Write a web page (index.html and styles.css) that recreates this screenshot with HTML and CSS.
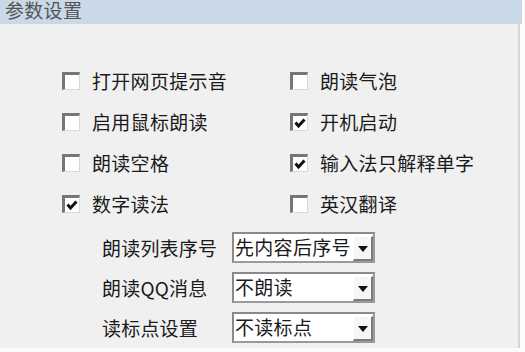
FILE: index.html
```html
<!DOCTYPE html>
<html lang="zh-CN">
<head>
    <meta charset="UTF-8">
    <title>参数设置</title>
    <link rel="stylesheet" href="styles.css">
</head>
<body>
    <div class="window">
        <div class="header">
            <span class="title">参数设置</span>
        </div>
        <div class="panel">
            <div class="options">
                <label class="check"><span class="box"></span><span>打开网页提示音</span></label>
                <label class="check"><span class="box"></span><span>朗读气泡</span></label>
                <label class="check"><span class="box"></span><span>启用鼠标朗读</span></label>
                <label class="check"><span class="box checked"><svg viewBox="0 0 12 12"><polyline points="1.5,5.5 4.5,9 10.5,2.5"/></svg></span><span>开机启动</span></label>
                <label class="check"><span class="box"></span><span>朗读空格</span></label>
                <label class="check"><span class="box checked"><svg viewBox="0 0 12 12"><polyline points="1.5,5.5 4.5,9 10.5,2.5"/></svg></span><span>输入法只解释单字</span></label>
                <label class="check"><span class="box checked"><svg viewBox="0 0 12 12"><polyline points="1.5,5.5 4.5,9 10.5,2.5"/></svg></span><span>数字读法</span></label>
                <label class="check"><span class="box"></span><span>英汉翻译</span></label>
            </div>
            <div class="selects">
                <span class="field-label">朗读列表序号</span>
                <div class="combo"><span class="combo-text">先内容后序号</span><span class="combo-btn"><i></i></span></div>
                <span class="field-label">朗读QQ消息</span>
                <div class="combo"><span class="combo-text">不朗读</span><span class="combo-btn"><i></i></span></div>
                <span class="field-label">读标点设置</span>
                <div class="combo"><span class="combo-text">不读标点</span><span class="combo-btn"><i></i></span></div>
            </div>
        </div>
    </div>
</body>
</html>
```

FILE: styles.css
```css
* {
    margin: 0;
    padding: 0;
    box-sizing: border-box;
}

body {
    width: 525px;
    height: 352px;
    overflow: hidden;
    background-color: #fbfbfb;
    font-family: 'Noto Sans CJK SC', 'Noto Sans', sans-serif;
    color: #1a1a1a;
}

.window {
    width: 522px;
    height: 352px;
    padding-top: 4px;
    background-color: #fbfbfb;
}

.header {
    height: 24px;
    background-color: #c9d9e8;
    padding-left: 5px;
}

.title {
    display: block;
    font-size: 19px;
    line-height: 19px;
    letter-spacing: 0.3px;
    color: #555;
    margin-top: -4px;
}

.panel {
    width: 520px;
    height: 324px;
    background-color: #f0f0f0;
    border-right: 2px solid #d6d6d6;
    padding-top: 36px;
}

/* checkbox grid */
.options {
    display: grid;
    grid-template-columns: 228px 1fr;
    grid-auto-rows: 41px;
    align-items: center;
    padding-left: 62px;
}

.check {
    display: flex;
    align-items: center;
    gap: 12px;
    font-size: 19px;
    letter-spacing: 0.3px;
}

.box {
    width: 18px;
    height: 18px;
    background-color: #fff;
    border-top: 3px solid #767676;
    border-left: 3px solid #767676;
    border-right: 1px solid #d8d8d8;
    border-bottom: 1px solid #d8d8d8;
    display: flex;
    align-items: center;
    justify-content: center;
}

.box svg {
    width: 12px;
    height: 12px;
}

.box polyline {
    fill: none;
    stroke: #111;
    stroke-width: 3;
}

/* combo boxes */
.selects {
    display: grid;
    grid-template-columns: 130px 143px;
    grid-auto-rows: 31px;
    row-gap: 9px;
    align-items: center;
    padding-left: 102px;
    margin-top: 8px;
}

.field-label {
    font-size: 19px;
    letter-spacing: 0.2px;
}

.combo {
    height: 31px;
    display: flex;
    background-color: #fff;
    border: 2px solid #8a8a8a;
    border-right-color: #9a9a9a;
    border-bottom-color: #9a9a9a;
}

.combo-text {
    flex: 1;
    overflow: hidden;
    white-space: nowrap;
    font-size: 19px;
    line-height: 26px;
    letter-spacing: 0.3px;
    padding-left: 1px;
}

.combo-btn {
    width: 20px;
    margin-top: 2px;
    background-color: #f6f6f6;
    border-top: 1px solid #fff;
    border-left: 1px solid #fff;
    border-right: 2px solid #7c7c7c;
    border-bottom: 2px solid #7c7c7c;
    display: flex;
    align-items: center;
    justify-content: center;
    padding-top: 2px;
}

.combo-btn i {
    width: 0;
    height: 0;
    border-left: 5px solid transparent;
    border-right: 5px solid transparent;
    border-top: 6px solid #111;
}
```
